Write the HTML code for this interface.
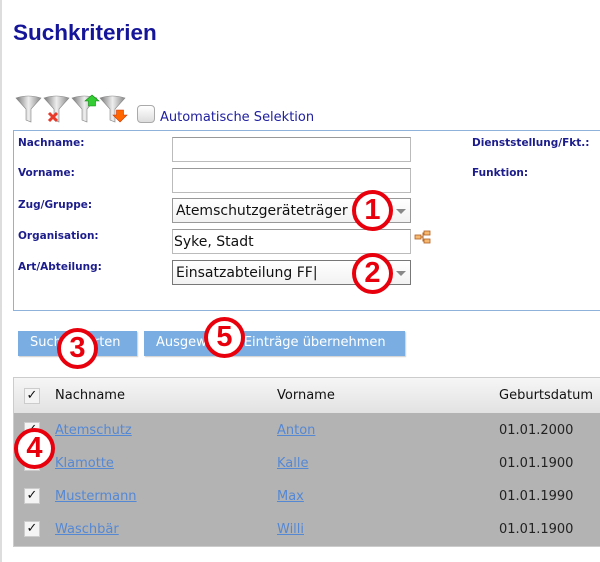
<!DOCTYPE html>
<html><head><meta charset="utf-8"><style>
*{margin:0;padding:0;box-sizing:border-box}
body{width:600px;height:562px;background:#fff;position:relative;overflow:hidden;font-family:"DejaVu Sans",sans-serif}
.a{position:absolute}
.lbl{position:absolute;font-size:10.5px;font-weight:bold;color:#1c1c8c}
.inp{position:absolute;left:172px;width:239px;height:25px;border:1px solid #bbb;border-top-color:#999;background:#fff;font-size:14px;color:#111;padding:4px 0 0 3px}
.sel{border-color:#999;background:linear-gradient(#fff,#f2f2f2)}
.arr{position:absolute;right:4px;top:10px;width:0;height:0;border-left:5px solid transparent;border-right:5px solid transparent;border-top:5px solid #888}
.btn{position:absolute;top:331px;height:25px;background:#7aaee2;color:#fff;font-size:13px;line-height:24px;box-shadow:1px 1px 1px #ccc;padding-left:12px;white-space:nowrap}
.row{position:absolute;left:14px;width:586px;height:33px;font-size:13px}
.row a{position:absolute;top:10px;color:#5588d4;text-decoration:underline}
.row .d{position:absolute;left:485px;top:10px;color:#222}
.cb{position:absolute;left:10px;top:9px;width:16px;height:16px;background:#f4f4f4;border:1px solid #ccc;font-size:13px;line-height:14px;text-align:center;color:#111}
.c{position:absolute;width:41px;height:41px;border:4px solid #e8000c;border-radius:50%;background:#fff;color:#e8000c;font-weight:bold;font-size:29px;text-align:center;line-height:33px;font-family:"Liberation Sans",sans-serif}
</style></head><body>
<div class="a" style="left:0;top:0;width:2px;height:562px;background:#ddd"></div>
<div class="a" style="left:13px;top:20px;font-size:22.5px;font-weight:bold;color:#15159a;font-family:'Liberation Sans',sans-serif">Suchkriterien</div>
<svg class="a" style="left:15px;top:94px" width="120" height="30" viewBox="0 0 120 30">
<defs><linearGradient id="g" x1="0" x2="1"><stop offset="0" stop-color="#777"/><stop offset=".5" stop-color="#eee"/><stop offset="1" stop-color="#888"/></linearGradient></defs>
<g fill="url(#g)" stroke="#888" stroke-width=".6">
<path d="M1 4 Q13 0 26 4 L16 15 L16 28 L11 26 L11 15 Z"/>
<path d="M29 4 Q41 0 54 4 L44 15 L44 28 L39 26 L39 15 Z"/>
<path d="M57 4 Q69 0 82 4 L72 15 L72 28 L67 26 L67 15 Z"/>
<path d="M85 4 Q97 0 110 4 L100 15 L100 28 L95 26 L95 15 Z"/></g>
<path d="M34 19 L42 27 M42 19 L34 27" stroke="#e83a2a" stroke-width="3"/>
<path d="M77 1 L84 7 L80.5 7 L80.5 12 L73.5 12 L73.5 7 L70 7 Z" fill="#3c3" stroke="#181" stroke-width=".6"/>
<path d="M105 28 L112 21 L108.5 21 L108.5 16 L101.5 16 L101.5 21 L98 21 Z" fill="#f60" stroke="#c30" stroke-width=".6"/>
</svg>
<div class="a" style="left:137px;top:105px;width:18px;height:18px;border:1px solid #aaa;border-radius:4px;background:linear-gradient(#fff,#ddd)"></div>
<div class="a" style="left:160px;top:110px;font-size:13px;color:#2020a0">Automatische Selektion</div>
<div class="a" style="left:13px;top:130px;width:600px;height:181px;border:1px solid #8eb2da"></div>
<div class="lbl" style="left:18px;top:137px">Nachname:</div>
<div class="lbl" style="left:18px;top:167px">Vorname:</div>
<div class="lbl" style="left:18px;top:199px">Zug/Gruppe:</div>
<div class="lbl" style="left:18px;top:230px">Organisation:</div>
<div class="lbl" style="left:18px;top:261px">Art/Abteilung:</div>
<div class="lbl" style="left:472px;top:137px">Dienststellung/Fkt.:</div>
<div class="lbl" style="left:472px;top:167px">Funktion:</div>
<div class="inp" style="top:137px"></div>
<div class="inp" style="top:168px"></div>
<div class="inp sel" style="top:198px">Atemschutzgeräteträger<div class="arr"></div></div>
<div class="inp" style="top:229px;padding-left:1px">Syke, Stadt</div>
<div class="inp sel" style="top:260px;border-color:#777">Einsatzabteilung FF|<div class="arr"></div></div>
<svg class="a" style="left:414px;top:229px" width="18" height="16"><g fill="#f4b870" stroke="#b06020" stroke-width=".8"><rect x="1" y="6" width="6" height="4"/><rect x="10" y="2" width="6" height="4"/><rect x="10" y="10" width="6" height="4"/></g><path d="M7 8 H9 V4 H10 M9 8 V12 H10" stroke="#b06020" fill="none"/></svg>
<div class="btn" style="left:18px;width:119px">Suche starten</div>
<div class="btn" style="left:144px;width:261px">Ausgewählte Einträge übernehmen</div>
<div class="a" style="left:13px;top:377px;width:590px;height:170px;border:1px solid #ccc;border-right:none"></div>
<div class="row" style="top:378px;height:35px;background:linear-gradient(#f6f6f6,#e2e2e2);color:#111">
<div class="cb" style="top:10px">✓</div>
<span class="a" style="left:41px;top:10px">Nachname</span><span class="a" style="left:263px;top:10px">Vorname</span><span class="a" style="left:485px;top:10px">Geburtsdatum</span></div>
<div class="a" style="left:14px;top:413px;width:586px;height:133px;background:#b3b3b3"></div>
<div class="row" style="top:413px"><div class="cb">✓</div><a style="left:41px">Atemschutz</a><a style="left:263px">Anton</a><span class="d">01.01.2000</span></div>
<div class="row" style="top:446px"><div class="cb">✓</div><a style="left:41px">Klamotte</a><a style="left:263px">Kalle</a><span class="d">01.01.1900</span></div>
<div class="row" style="top:479px"><div class="cb">✓</div><a style="left:41px">Mustermann</a><a style="left:263px">Max</a><span class="d">01.01.1990</span></div>
<div class="row" style="top:512px"><div class="cb">✓</div><a style="left:41px">Waschbär</a><a style="left:263px">Willi</a><span class="d">01.01.1900</span></div>
<div class="c" style="left:352px;top:190px">1</div>
<div class="c" style="left:352px;top:253px">2</div>
<div class="c" style="left:57px;top:328px">3</div>
<div class="c" style="left:14px;top:428px">4</div>
<div class="c" style="left:204px;top:317px">5</div>
</body></html>
